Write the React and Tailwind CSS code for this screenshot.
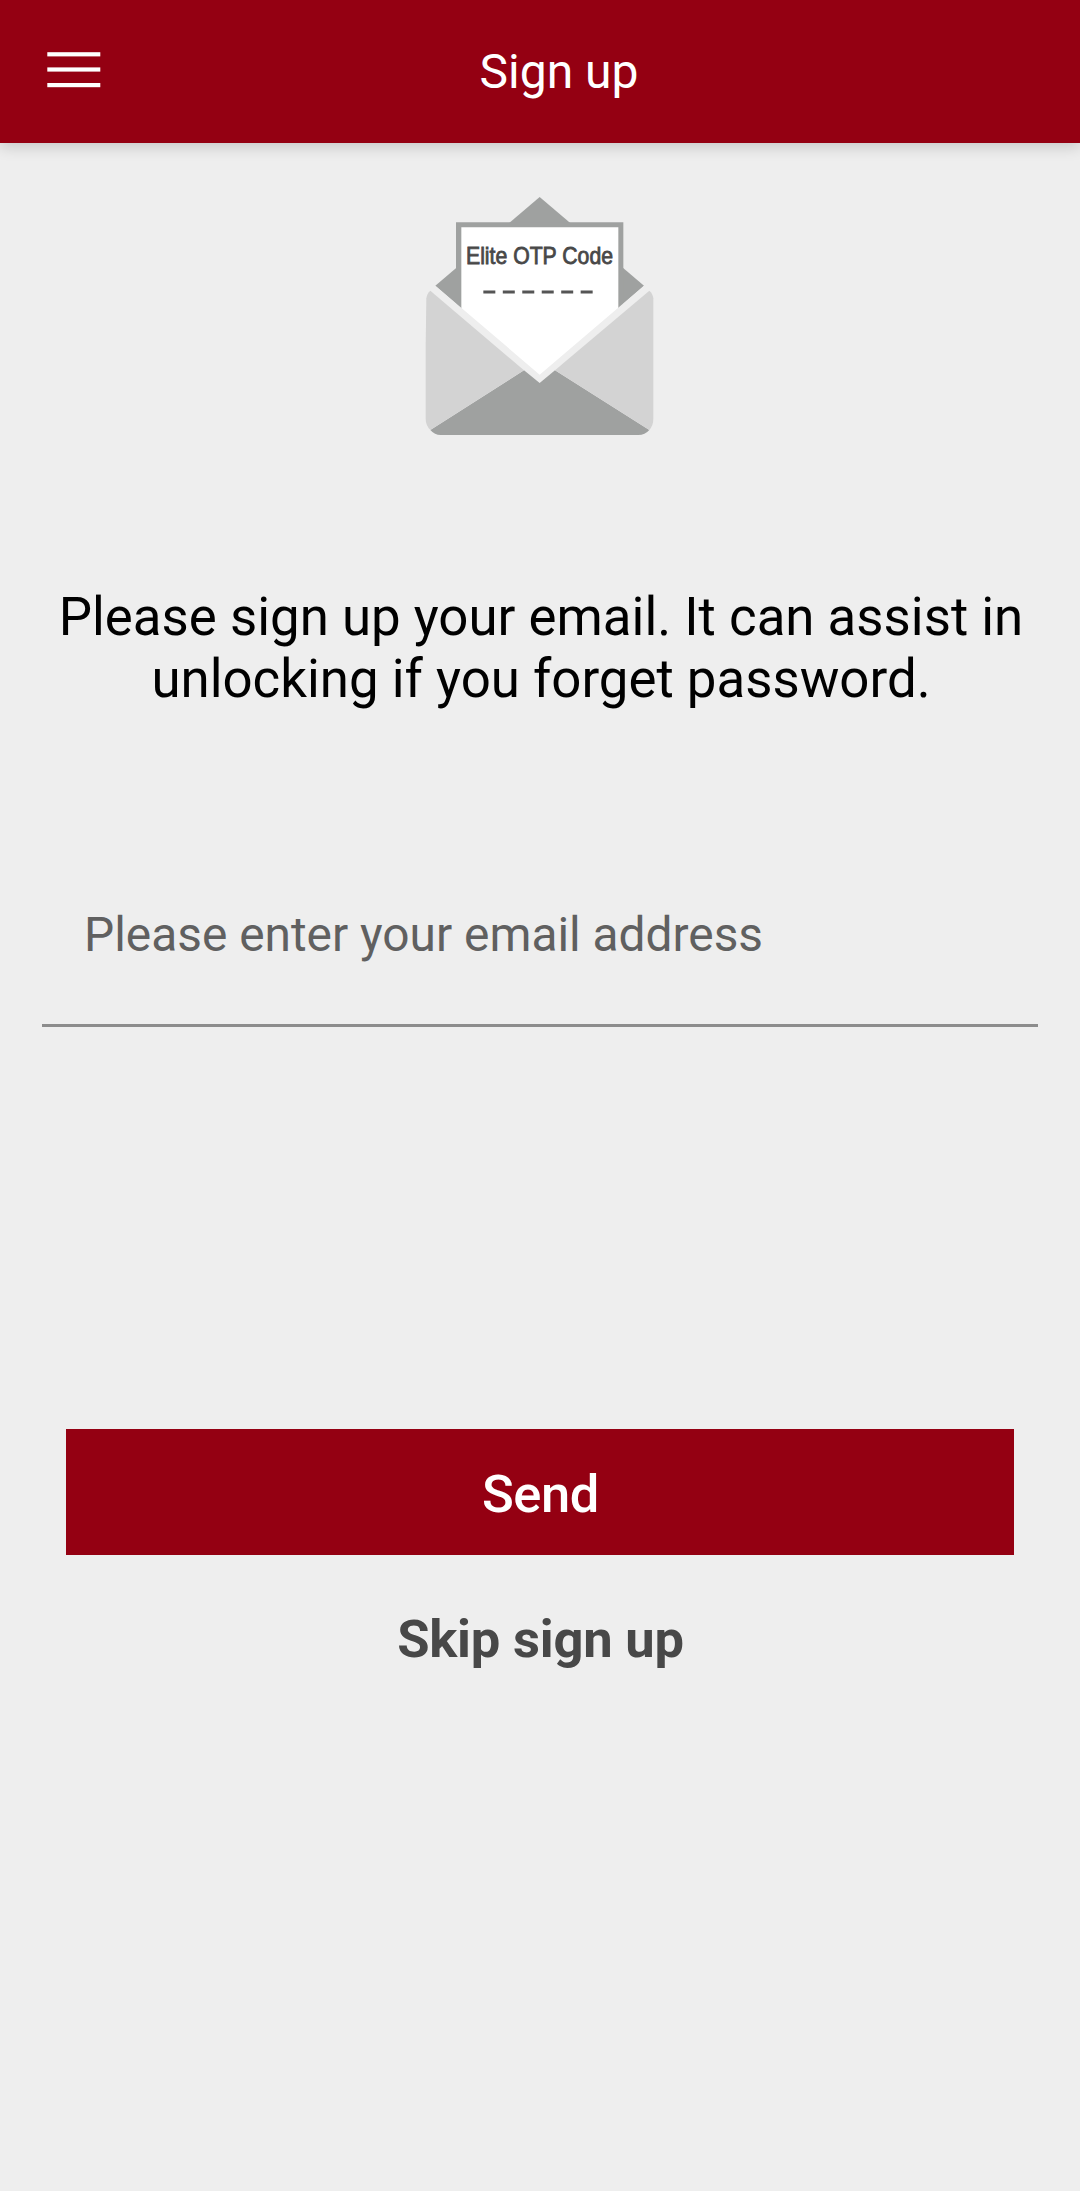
import React, { useState } from 'react'

const MenuIcon = () => (
  <svg width="54" height="36" viewBox="0 0 54 36" fill="#fff">
    <rect x="0.3" y="0.2" width="53" height="4.2" />
    <rect x="0.3" y="15.4" width="53" height="4.2" />
    <rect x="0.3" y="31" width="53" height="4.2" />
  </svg>
)

const EnvelopeIcon = () => (
  <svg width="280" height="270" viewBox="0 0 840 810">
    {/* open flap */}
    <path d="M419 51 L732 317 L419 590 L106 317 Z" fill="#9fa1a0" />

    {/* letter */}
    <path d="M168 127 H670 V380 L419 590 L168 380 Z" fill="#9fa1a0" />
    <path d="M184 142 H655 V400 L419 600 L184 400 Z" fill="#fff" />
    <text
      x="198"
      y="252"
      textLength="441"
      lengthAdjust="spacingAndGlyphs"
      fontSize="71"
      fill="#484848"
      stroke="#484848"
      strokeWidth="2.5"
      fontFamily="Liberation Sans, Arial, sans-serif"
    >
      Elite OTP Code
    </text>
    <path d="M250 336 H580" stroke="#555" strokeWidth="9" strokeDasharray="36 22.4" />

    {/* gap between the letter and the pocket */}
    <path d="M106 317 L419 584 L732 317 L752 330 L480 572 L419 612 L360 572 L86 330 Z" fill="#eee" />

    {/* pocket */}
    <path d="M372 571 L419 609 L465 571 L748 750 Q735 765 715 765 H122 Q104 765 91 750 Z" fill="#9fa1a0" />
    <path d="M91 332 L372 571 L91 750 Q77 737 77 715 V498 L79 355 Q81 340 91 332 Z" fill="#d3d3d3" />
    <path d="M748 332 L465 571 L748 750 Q760 737 760 715 V355 Q758 340 748 332 Z" fill="#d3d3d3" />
  </svg>
)

const App = () => {
  const [email, setEmail] = useState("")

  return (
    <section className="h-[2191px] w-[1080px] overflow-hidden bg-[#eee] font-['Roboto',sans-serif]">
      <header className="grid h-[143px] grid-cols-[180px_1fr_142px] bg-[#940012] shadow-[0_4px_14px_rgba(0,0,0,0.16)]">
        <button className="flex items-start pl-[47px] pt-[52px]" aria-label="Menu">
          <MenuIcon />
        </button>
        <h1 className="pt-[44px] text-center text-[48px] leading-[56px] text-white">Sign up</h1>
      </header>

      <main className="flex flex-col">
        <div className="mt-[37px] flex justify-center">
          <EnvelopeIcon />
        </div>

        <p className="mt-[136px] pl-[2px] text-center text-[52.8px] leading-[62px] text-black">
          Please sign up your email. It can assist in
          <br />
          unlocking if you forget password.
        </p>

        <div className="mx-[42px] mt-[170px] h-[147px] border-b-[3px] border-[#8c8c8c] pl-[42px] pt-[27px]">
          <input
            type="email"
            value={email}
            onChange={(e) => setEmail(e.target.value)}
            placeholder="Please enter your email address"
            className="block h-[56px] w-full bg-transparent text-[47.85px] leading-[56px] text-[#606060] outline-none placeholder:text-[#606060]"
          />
        </div>

        <button className="mx-[66px] mt-[402px] h-[126px] bg-[#940012] pl-[1px] pt-[4px] text-[52.5px] font-medium leading-[62px] tracking-[-0.4px] text-white">
          Send
        </button>
        <button className="mt-[53px] self-center pl-[1px] text-[52.5px] font-bold leading-[62px] tracking-[-0.2px] text-[#484848]">
          Skip sign up
        </button>
      </main>
    </section>
  )
}

export default App
